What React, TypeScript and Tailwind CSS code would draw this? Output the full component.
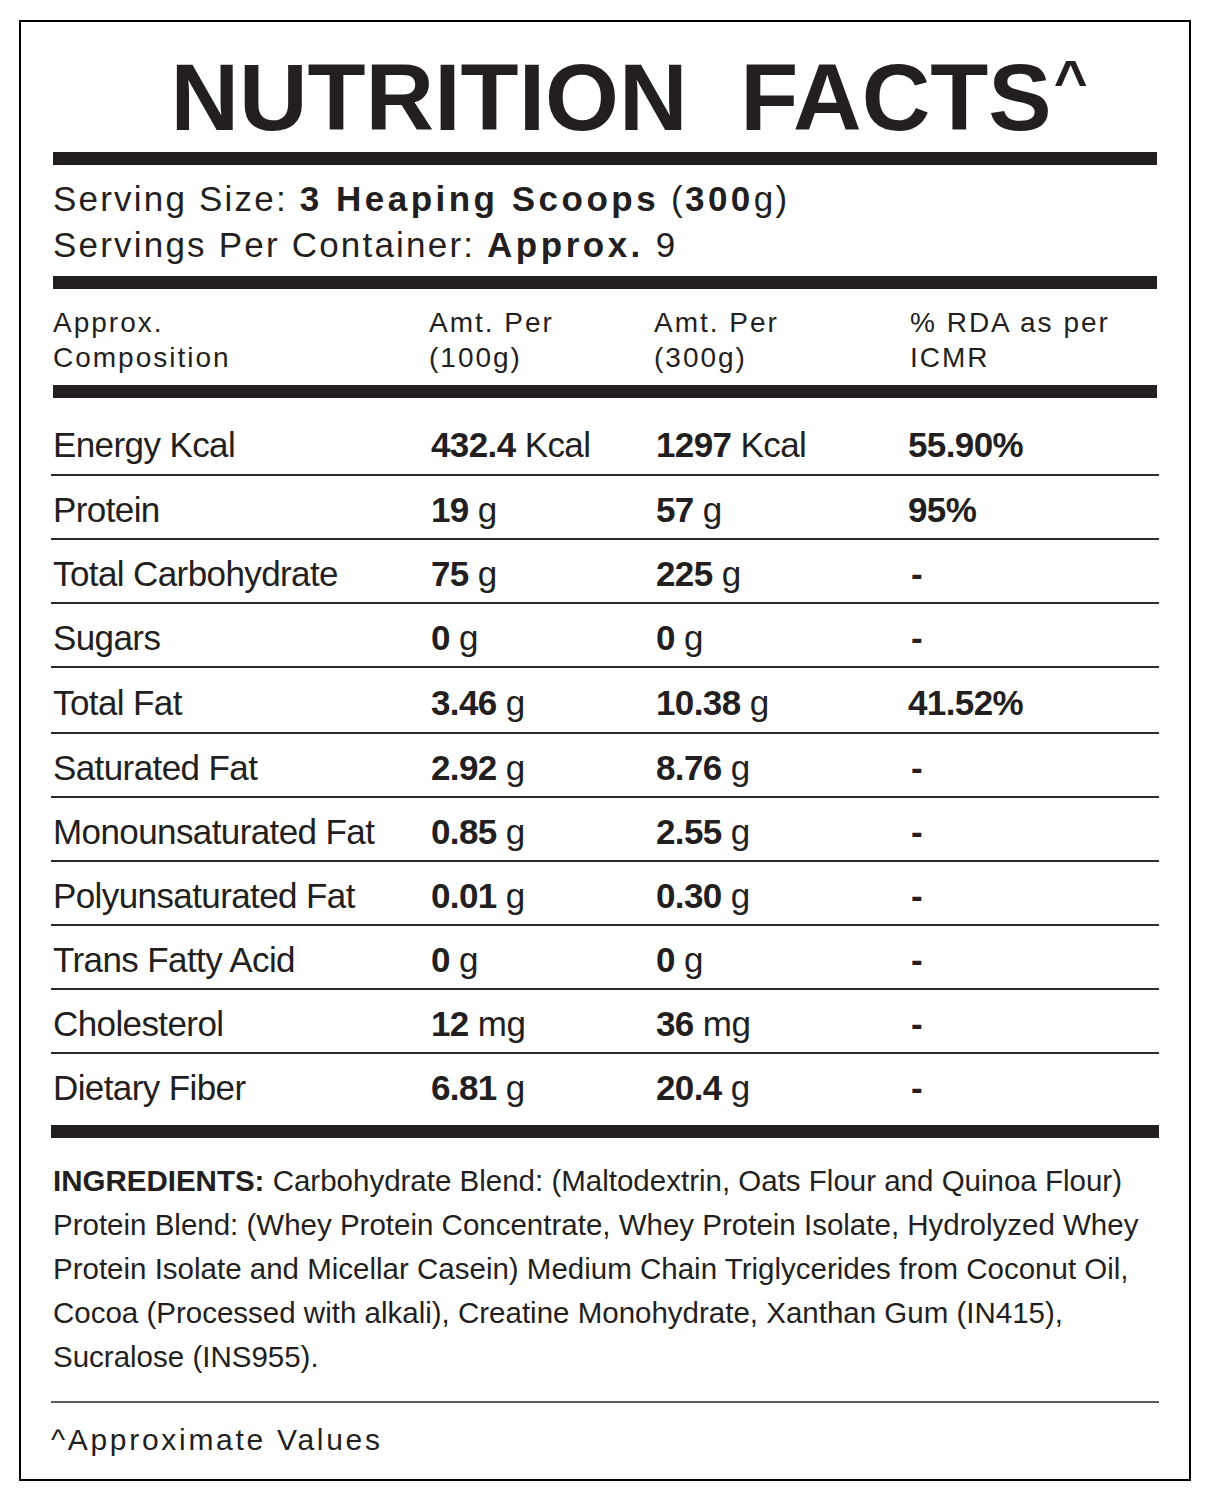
import React from "react";

interface Row {
  label: string;
  per100: [string, string];
  per300: [string, string];
  rda: string;
  height: string;
  padTop: string;
  last?: boolean;
}

const rows: Row[] = [
  { label: "Energy Kcal", per100: ["432.4", "Kcal"], per300: ["1297", "Kcal"], rda: "55.90%", height: "h-[78px]", padTop: "pt-[27px]" },
  { label: "Protein", per100: ["19", "g"], per300: ["57", "g"], rda: "95%", height: "h-[64px]", padTop: "pt-[14px]" },
  { label: "Total Carbohydrate", per100: ["75", "g"], per300: ["225", "g"], rda: "-", height: "h-[64px]", padTop: "pt-[14px]" },
  { label: "Sugars", per100: ["0", "g"], per300: ["0", "g"], rda: "-", height: "h-[64px]", padTop: "pt-[14px]" },
  { label: "Total Fat", per100: ["3.46", "g"], per300: ["10.38", "g"], rda: "41.52%", height: "h-[66px]", padTop: "pt-[15px]" },
  { label: "Saturated Fat", per100: ["2.92", "g"], per300: ["8.76", "g"], rda: "-", height: "h-[64px]", padTop: "pt-[14px]" },
  { label: "Monounsaturated Fat", per100: ["0.85", "g"], per300: ["2.55", "g"], rda: "-", height: "h-[64px]", padTop: "pt-[14px]" },
  { label: "Polyunsaturated Fat", per100: ["0.01", "g"], per300: ["0.30", "g"], rda: "-", height: "h-[64px]", padTop: "pt-[14px]" },
  { label: "Trans Fatty Acid", per100: ["0", "g"], per300: ["0", "g"], rda: "-", height: "h-[64px]", padTop: "pt-[14px]" },
  { label: "Cholesterol", per100: ["12", "mg"], per300: ["36", "mg"], rda: "-", height: "h-[64px]", padTop: "pt-[14px]" },
  { label: "Dietary Fiber", per100: ["6.81", "g"], per300: ["20.4", "g"], rda: "-", height: "h-[71px]", padTop: "pt-[14px]", last: true },
];

const Bar = ({ className = "" }: { className?: string }) => (
  <div className={`h-[13px] bg-[#231f20] ${className}`} />
);

// bold amount followed by a regular unit
const Amount = ({ value }: { value: [string, string] }) => (
  <span>
    <span className="font-bold">{value[0]}</span> {value[1]}
  </span>
);

const App: React.FC = () => {
  return (
    <div className="min-h-[1500px] bg-white pt-5 pl-[19px] font-['Liberation_Sans',Arial,sans-serif] text-[#231f20]">
      <div className="box-border flex h-[1461px] w-[1172px] flex-col border-2 border-black px-[32px]">
        {/* Title */}
        <h1 className="mt-[28px] whitespace-pre pl-[48px] text-center text-[95px] leading-[95px] font-bold">
          {"NUTRITION  FACTS"}
          <span className="ml-[2px] align-[30px] text-[58px] leading-none">^</span>
        </h1>

        <Bar className="mt-[7px]" />

        {/* Serving info */}
        <div className="mt-[11px] text-[35px] leading-[46px] tracking-[2.2px]">
          <p>
            Serving Size: <span className="font-bold tracking-[3.5px]">3 Heaping Scoops</span> (
            <span className="font-bold tracking-[3.5px]">300</span>g)
          </p>
          <p>
            Servings Per Container: <span className="font-bold tracking-[3.5px]">Approx.</span> 9
          </p>
        </div>

        <Bar className="mt-[8px]" />

        {/* Column header */}
        <div className="mt-[16px] grid grid-cols-[376px_225px_252px_1fr] text-[28px] leading-[35px] tracking-[2px]">
          <div>
            Approx.
            <br />
            Composition
          </div>
          <div>
            Amt. Per
            <br />
            (100g)
          </div>
          <div>
            Amt. Per
            <br />
            (300g)
          </div>
          <div className="pl-[4px]">
            % RDA as per
            <br />
            ICMR
          </div>
        </div>

        <Bar className="mt-[10px]" />

        {/* Nutrient rows */}
        <div className="-mx-[2px]">
          {rows.map((row) => (
            <div
              key={row.label}
              className={`box-border grid grid-cols-[378px_225px_252px_1fr] px-[2px] text-[35px] leading-[40px] tracking-[-0.6px] ${row.height} ${row.padTop} ${
                row.last ? "" : "border-b-2 border-[#2b2b2b]"
              }`}
            >
              <div>{row.label}</div>
              <div>
                <Amount value={row.per100} />
              </div>
              <div>
                <Amount value={row.per300} />
              </div>
              <div className="font-bold">{row.rda === "-" ? <span className="pl-[3px]">-</span> : row.rda}</div>
            </div>
          ))}
        </div>

        <div className="-mx-[2px] h-[13px] bg-[#231f20]" />

        {/* Ingredients */}
        <div className="mt-[21px] whitespace-nowrap text-[29.5px] leading-[44px]">
          <p>
            <span className="font-bold">INGREDIENTS:</span> Carbohydrate Blend: (Maltodextrin, Oats Flour and Quinoa Flour)
          </p>
          <p>Protein Blend: (Whey Protein Concentrate, Whey Protein Isolate, Hydrolyzed Whey</p>
          <p>Protein Isolate and Micellar Casein) Medium Chain Triglycerides from Coconut Oil,</p>
          <p>Cocoa (Processed with alkali), Creatine Monohydrate, Xanthan Gum (IN415),</p>
          <p>Sucralose (INS955).</p>
        </div>

        <div className="-mx-[2px] mt-[22px] h-[2px] bg-[#5a5a5a]" />

        <p className="-ml-[2px] mt-[19px] text-[30px] leading-[36px] tracking-[2.7px]">^Approximate Values</p>
      </div>
    </div>
  );
};

export default App;
